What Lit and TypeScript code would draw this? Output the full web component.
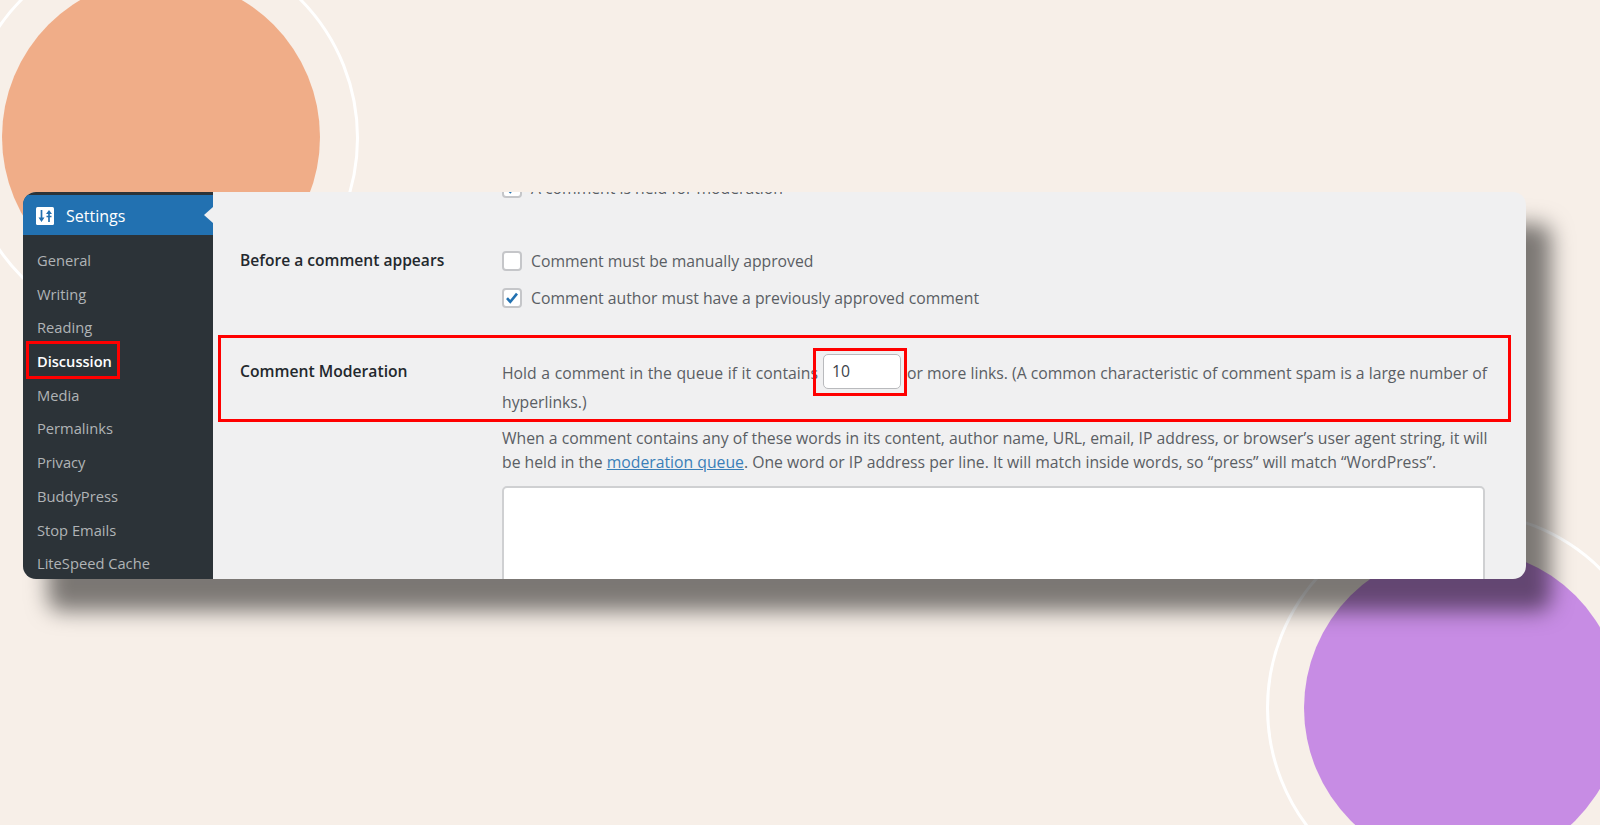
import { LitElement, css, html } from 'lit';
import { customElement } from 'lit/decorators.js';

const menu = ['General', 'Writing', 'Reading', 'Discussion', 'Media', 'Permalinks', 'Privacy', 'BuddyPress', 'Stop Emails', 'LiteSpeed Cache'];

@customElement('app-root')
export class AppRoot extends LitElement {
  static styles = css`
    :host {
      display: block;
      position: relative;
      width: 1600px;
      height: 825px;
      overflow: hidden;
      background: #f7efe8;
      font-family: 'Open Sans', 'Noto Sans', sans-serif;
      font-size: 15.75px;
      line-height: 24px;
      color: #5a5e64;
    }

    /* decoration behind the panel */
    .blob {
      position: absolute;
      border-radius: 50%;
      box-sizing: border-box;
    }
    .orange { left: 2px; top: -22px; width: 318px; height: 318px; background: #f0ad88; }
    .orange-ring { left: -37px; top: -60px; width: 396px; height: 396px; border: 3px solid #fff; }
    .purple { left: 1304px; top: 549px; width: 318px; height: 318px; background: #c78ce4; }
    .purple-ring { left: 1266px; top: 511px; width: 394px; height: 394px; border: 3px solid #fff; }

    .stage {
      position: relative;
      padding: 192px 0 0 23px;
    }
    .panel {
      display: flex;
      width: 1503px;
      height: 387px;
      border-radius: 13px;
      overflow: hidden;
      background: #f0f0f1;
      box-shadow: 25px 32px 21px rgba(0, 0, 0, 0.5);
    }

    .sidebar {
      flex: 0 0 190px;
      background: #2c3338;
      padding-top: 3px;
      box-sizing: border-box;
    }
    .current {
      position: relative;
      display: flex;
      align-items: center;
      gap: 12px;
      height: 40px;
      padding: 1px 0 0 13px;
      box-sizing: border-box;
      background: #2271b1;
      color: #fff;
      font-size: 16px;
    }
    .current svg { display: block; width: 18px; height: 18px; }
    .current::after {
      content: '';
      position: absolute;
      right: 0;
      top: 12px;
      border: 8px solid transparent;
      border-left-width: 0;
      border-right: 9px solid #f0f0f1;
    }
    .items { padding-top: 9px; }
    .item {
      position: relative;
      height: 33.7px;
      line-height: 33.7px;
      padding-left: 14px;
      color: #b0b3b6;
      font-size: 14.7px;
      white-space: nowrap;
    }
    .item.on { color: #fff; font-weight: 600; font-size: 14.6px; }
    .item.on::after {
      content: '';
      position: absolute;
      left: 3px;
      top: -4px;
      width: 94px;
      height: 38px;
      box-sizing: border-box;
      border: 3px solid #f00;
    }

    .main {
      flex: 1;
      min-width: 0;
      overflow: hidden;
    }
    .row {
      display: grid;
      grid-template-columns: 262px 983px;
      padding-left: 27px;
    }
    .clipped { margin-top: -16px; }
    .appears { margin-top: 49px; }
    .label {
      font-size: 15.7px;
      font-weight: 600;
      color: #23282d;
      white-space: nowrap;
    }
    .appears .label { margin-top: -1px; font-size: 15.6px; }
    .option {
      display: flex;
      align-items: center;
      gap: 9px;
      height: 24px;
      white-space: nowrap;
    }
    .option + .option { margin-top: 13px; }
    .check {
      flex: none;
      width: 20px;
      height: 20px;
      box-sizing: border-box;
      border: 2px solid #c5c6c9;
      border-radius: 4px;
      background: #fff;
    }
    .check svg { display: block; width: 16px; height: 16px; }

    .moderation {
      margin: 25px 0 0 5px;
      width: 1293px;
      height: 87px;
      box-sizing: border-box;
      border: 3px solid #f00;
      padding-left: 19px;
      grid-template-columns: 262px 990px;
    }
    .moderation .label { padding-top: 21px; }
    .first-line {
      display: flex;
      align-items: center;
      height: 35px;
      box-sizing: border-box;
      padding-top: 2px;
      margin-top: 16px;
      white-space: nowrap;
    }
    .hold {
      flex: none;
      width: 321px;
      word-spacing: 0.5px;
    }
    .second-line { margin-top: 1px; }
    .number {
      position: relative;
      flex: none;
      width: 78px;
      height: 35px;
      box-sizing: border-box;
      margin: -2px 6px 0 0;
      padding-left: 8px;
      line-height: 32px;
      border: 1px solid #b9babd;
      border-radius: 5px;
      background: #fff;
      color: #3c434a;
    }
    .number::after {
      content: '';
      position: absolute;
      left: -11px;
      top: -7px;
      width: 94px;
      height: 48px;
      box-sizing: border-box;
      border: 3px solid #f00;
    }

    .keys { margin-top: 4px; }
    .keys p {
      margin: 0;
      white-space: nowrap;
    }
    .keys a { color: #3a7fb8; text-decoration: underline; }
    .words {
      width: 983px;
      height: 160px;
      margin-top: 12px;
      box-sizing: border-box;
      border: 2px solid #cfd0d2;
      border-radius: 5px;
      background: #fff;
    }
  `;

  private tick() {
    return html`<svg viewBox="0 0 16 16"><path d="M3 8.200l3.300 3.600L13 3.600" fill="none" stroke="#2271b1" stroke-width="2.600"/></svg>`;
  }

  render() {
    return html`
      <div class="blob orange"></div>
      <div class="blob orange-ring"></div>
      <div class="blob purple"></div>
      <div class="blob purple-ring"></div>

      <div class="stage">
        <div class="panel">
          <nav class="sidebar">
            <div class="current">
              <svg viewBox="0 0 18 18">
                <rect width="18" height="18" rx="1.500" fill="#fff"/>
                <path d="M5.500 3v8M13 6v9M10.500 9.500h5" fill="none" stroke="#2271b1" stroke-width="1.700"/>
                <path d="M2.500 10.500h6L5.500 15zM10 7h6l-3-4z" fill="#2271b1"/>
              </svg>
              Settings
            </div>
            <div class="items">
              ${menu.map((m) => html`<div class="item ${m === 'Discussion' ? 'on' : ''}">${m}</div>`)}
            </div>
          </nav>

          <main class="main">
            <div class="row clipped">
              <div></div>
              <div class="option"><span class="check">${this.tick()}</span>A comment is held for moderation</div>
            </div>

            <div class="row appears">
              <div class="label">Before a comment appears</div>
              <div>
                <div class="option"><span class="check"></span>Comment must be manually approved</div>
                <div class="option"><span class="check">${this.tick()}</span>Comment author must have a previously approved comment</div>
              </div>
            </div>

            <div class="row moderation">
              <div class="label">Comment Moderation</div>
              <div>
                <div class="first-line">
                  <span class="hold">Hold a comment in the queue if it contains</span>
                  <span class="number">10</span>
                  or more links. (A common characteristic of comment spam is a large number of
                </div>
                <div class="second-line">hyperlinks.)</div>
              </div>
            </div>

            <div class="row keys">
              <div></div>
              <div>
                <p>When a comment contains any of these words in its content, author name, URL, email, IP address, or browser’s user agent string, it will</p>
                <p>be held in the <a>moderation queue</a>. One word or IP address per line. It will match inside words, so “press” will match “WordPress”.</p>
                <div class="words"></div>
              </div>
            </div>
          </main>
        </div>
      </div>
    `;
  }
}
